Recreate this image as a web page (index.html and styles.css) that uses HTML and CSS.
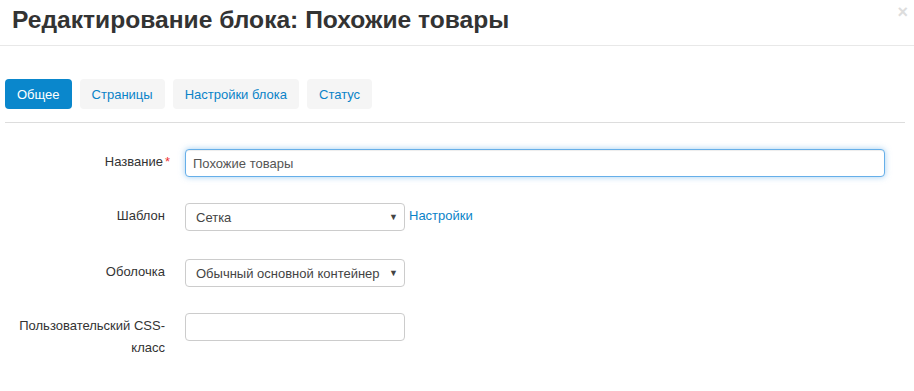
FILE: index.html
```html
<!DOCTYPE html>
<html lang="ru">
<head>
<meta charset="utf-8">
<link rel="stylesheet" href="styles.css">
</head>
<body>
<div class="modal">
  <div class="modal-header">
    <h3 class="title">Редактирование блока: Похожие товары</h3>
    <span class="close">×</span>
  </div>
  <div class="modal-body">
    <div class="tabs">
      <button class="tab active">Общее</button>
      <button class="tab">Страницы</button>
      <button class="tab">Настройки блока</button>
      <button class="tab">Статус</button>
    </div>
    <form class="form">
      <div class="group g1">
        <label class="label">Название<span class="req">*</span></label>
        <div class="ctrl"><input class="input focus" type="text" value="Похожие товары"></div>
      </div>
      <div class="group g2">
        <label class="label">Шаблон</label>
        <div class="ctrl">
          <div class="select"><span>Сетка</span><span class="caret">▼</span></div>
          <a class="link">Настройки</a>
        </div>
      </div>
      <div class="group g3">
        <label class="label">Оболочка</label>
        <div class="ctrl">
          <div class="select"><span>Обычный основной контейнер</span><span class="caret">▼</span></div>
        </div>
      </div>
      <div class="group g4">
        <label class="label">Пользовательский CSS-класс</label>
        <div class="ctrl"><input class="input small" type="text" value=""></div>
      </div>
    </form>
  </div>
</div>
</body>
</html>
```
FILE: styles.css
```css
* { box-sizing: border-box; }
html, body { margin: 0; padding: 0; background: #fff; }
body {
  font-family: "Liberation Sans", Arial, sans-serif;
  font-size: 13px;
  color: #333;
  width: 914px;
  height: 391px;
  overflow: hidden;
}
.modal-header {
  height: 46px;
  border-bottom: 1px solid #e8e8e8;
  display: flex;
  align-items: flex-start;
  justify-content: space-between;
  padding: 0 6px 0 12px;
}
.title {
  margin: 5px 0 0;
  font-size: 24.6px;
  line-height: 30px;
  font-weight: bold;
  color: #333;
}
.close {
  margin-top: 1px;
  font-size: 18px;
  font-weight: bold;
  color: #ddd;
  line-height: 22px;
}
.modal-body {
  padding: 33px 9px 0 5px;
}
.tabs {
  display: flex;
  gap: 8px;
  padding-bottom: 13px;
  border-bottom: 1px solid #ddd;
}
.tab {
  font-family: inherit;
  font-size: 13px;
  height: 30px;
  padding: 0 12px;
  border: 0;
  border-radius: 4px;
  background: #f5f5f5;
  color: #0a83c8;
}
.tab.active {
  background: #0a87cc;
  color: #fff;
}
.form { padding-top: 26px; }
.group {
  display: grid;
  grid-template-columns: 166px 1fr;
  column-gap: 14px;
  align-items: start;
  margin-bottom: 26px;
}
.g2 { margin-bottom: 28px; }
.label {
  text-align: right;
  line-height: 22px;
  padding-top: 2px;
  padding-left: 6px;
  color: #333;
}
.g1 .label { padding-right: 1px; }
.g2 .label, .g3 .label, .g4 .label { padding-right: 6px; }
.req { color: #e33; margin-left: 2px; }
.ctrl { display: flex; align-items: flex-start; gap: 4px; }
.input {
  font-family: inherit;
  font-size: 13px;
  color: #555;
  height: 28px;
  border: 1px solid #ccc;
  border-radius: 4px;
  padding: 0 7px;
  background: #fff;
}
.input.focus {
  width: 700px;
  border-color: #66afe9;
  outline: 0;
  box-shadow: inset 0 1px 1px rgba(0,0,0,.075), 0 0 6px rgba(102,175,233,.6);
}
.input.small { width: 220px; }
.select {
  width: 220px;
  height: 28px;
  border: 1px solid #ccc;
  border-radius: 4px;
  display: flex;
  align-items: center;
  justify-content: space-between;
  padding: 0 6px 0 10px;
  color: #444;
}
.caret { font-size: 9px; color: #444; }
.link { color: #0a83c8; line-height: 26px; }
```
